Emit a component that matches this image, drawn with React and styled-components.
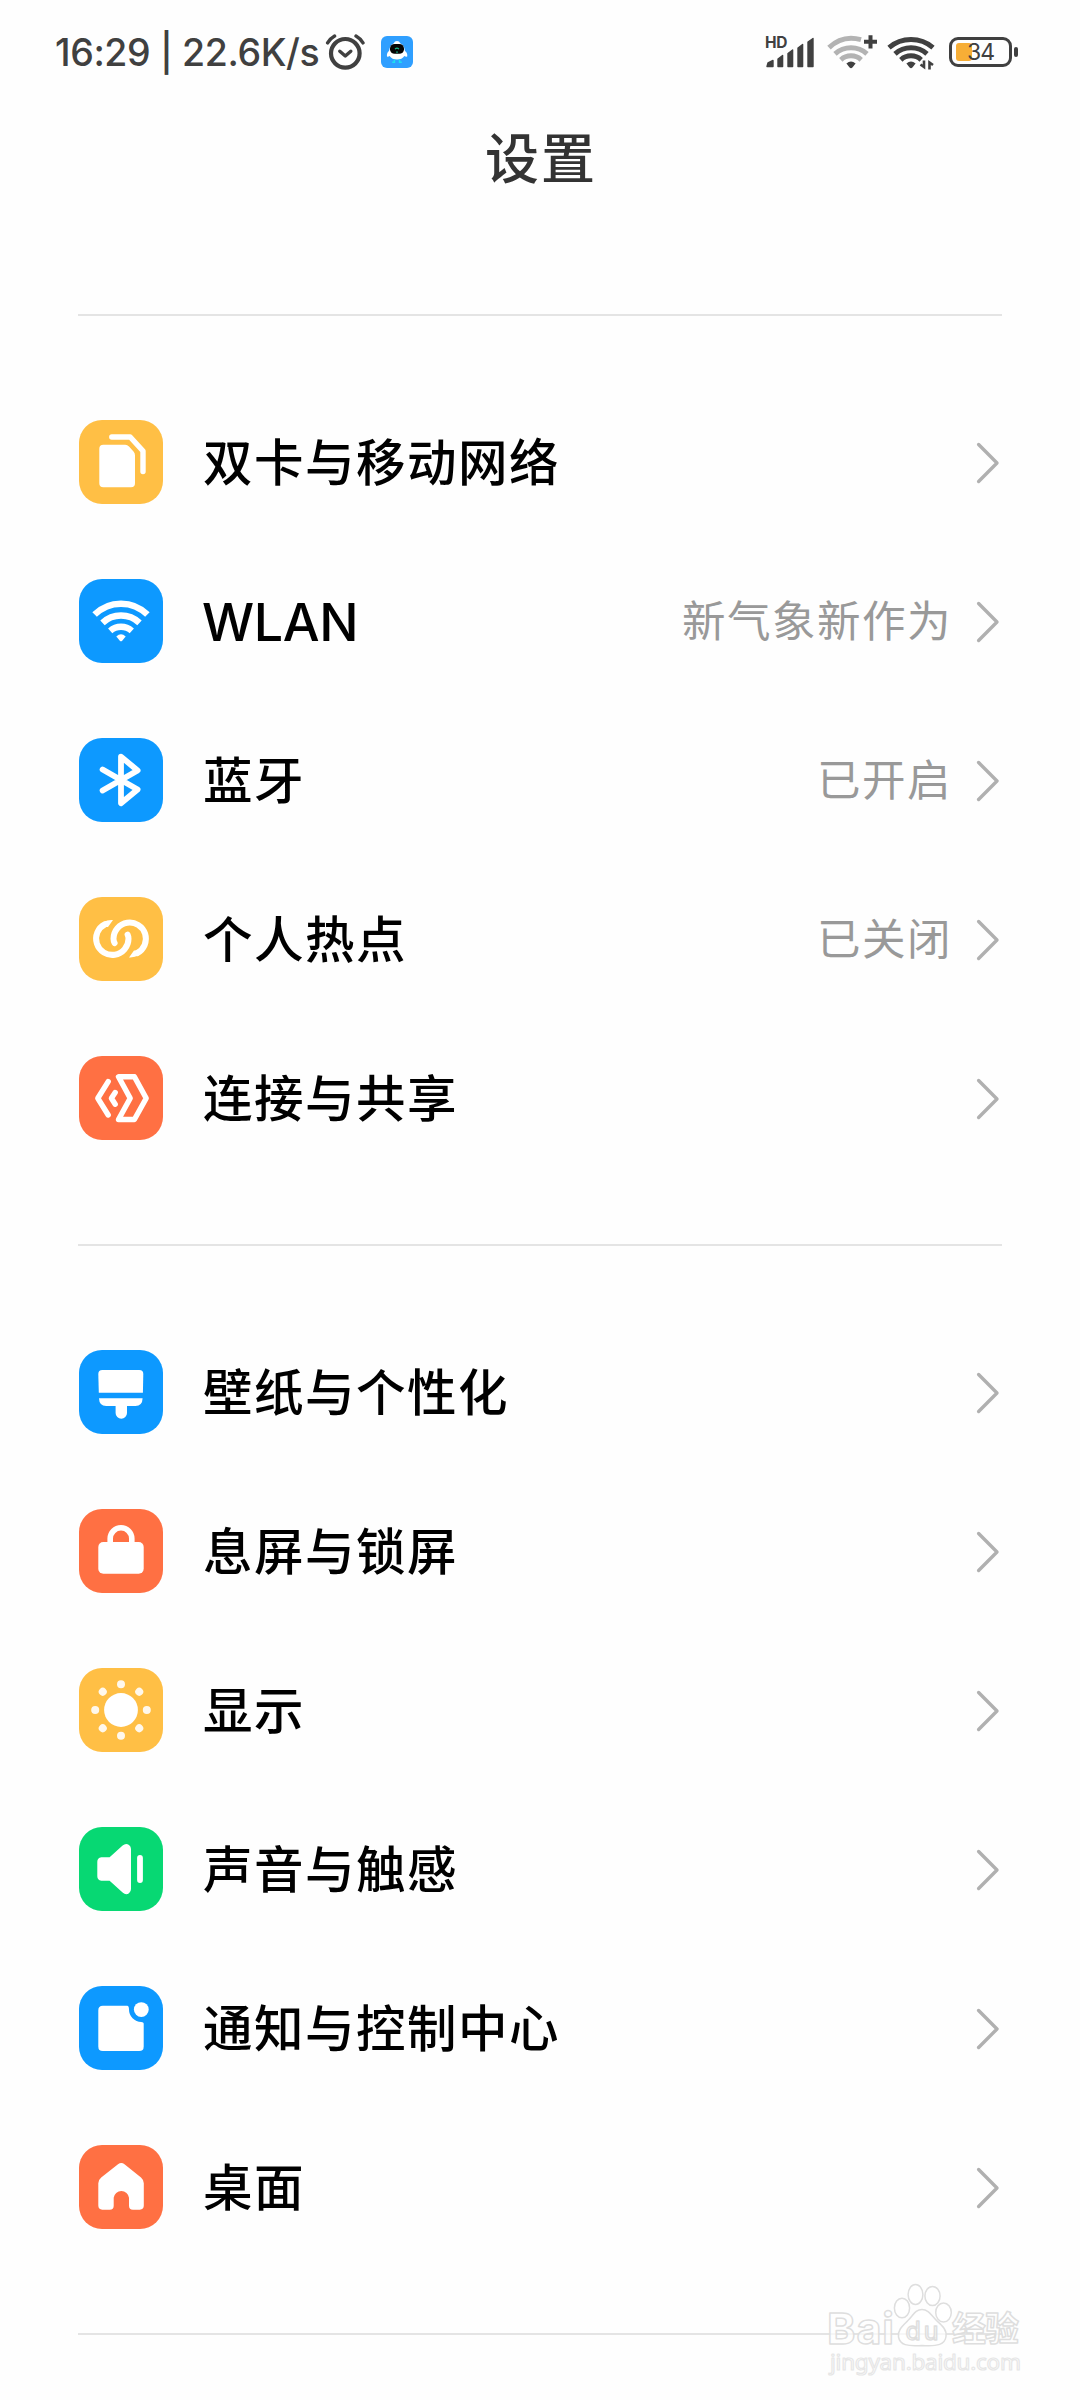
import styled, { createGlobalStyle } from "styled-components";

const YELLOW = "#ffbf45";
const BLUE = "#0d99ff";
const ORANGE = "#ff7043";
const GREEN = "#07d873";
const DARK = "#404040";

const networkItems = [
  { id: "sim", label: "双卡与移动网络", color: YELLOW },
  { id: "wlan", label: "WLAN", color: BLUE, value: "新气象新作为", latin: true },
  { id: "bluetooth", label: "蓝牙", color: BLUE, value: "已开启" },
  { id: "hotspot", label: "个人热点", color: YELLOW, value: "已关闭" },
  { id: "share", label: "连接与共享", color: ORANGE },
];

const deviceItems = [
  { id: "wallpaper", label: "壁纸与个性化", color: BLUE },
  { id: "lock", label: "息屏与锁屏", color: ORANGE },
  { id: "display", label: "显示", color: YELLOW },
  { id: "sound", label: "声音与触感", color: GREEN },
  { id: "notice", label: "通知与控制中心", color: BLUE },
  { id: "home", label: "桌面", color: ORANGE },
];

const line = {
  fill: "none",
  stroke: "#fff",
  strokeLinecap: "round",
  strokeLinejoin: "round",
};

// white glyphs, drawn on an 84 x 84 tile
const glyphs = {
  sim: (
    <>
      <path
        d="M24.3 24.8H46.2Q48.4 24.8 50 26.4L54.5 31.4Q56 33 56 35.4V63.3Q56 67.3 52 67.3H24.3Q20.3 67.3 20.3 63.3V28.8Q20.3 24.8 24.3 24.8Z"
        fill="#fff"
      />
      <path d="M32.8 17H51.2L64 31V51.5" strokeWidth="5.4" {...line} />
    </>
  ),
  wlan: (
    <>
      <g {...line} strokeLinecap="butt" strokeWidth="6.4">
        <path d="M15.6 35.6A37.4 37.4 0 0 1 68.4 35.6" />
        <path d="M23.5 43.8A27 27 0 0 1 60.5 43.8" />
        <path d="M31.2 51.8A16.3 16.3 0 0 1 52.8 51.8" />
      </g>
      <path d="M37.3 57.6Q42 52.8 46.7 57.6L43.2 61.8Q42 62.8 40.8 61.8Z" fill="#fff" />
    </>
  ),
  bluetooth: (
    <path
      d="M23.6 31.5L58.6 51.5L42 65.2V18.6L58.6 32.5L23.6 52.5"
      strokeWidth="5.8"
      {...line}
    />
  ),
  hotspot: (
    <>
      <g {...line} strokeWidth="6">
        <path d="M26 27.2A16.2 16.2 0 1 0 49.5 41.7Q49.5 39.4 48.6 37.6" />
        <path d="M58 56.2A16.2 16.2 0 1 0 34.5 41.7Q34.5 44 35.6 46" />
      </g>
      <path d="M24 25.4Q28.5 22.6 34 23L29 30L26 30Z" fill="#fff" />
      <path d="M60 58Q55.5 60.8 50 60.4L55 53.4L58 53.4Z" fill="#fff" />
    </>
  ),
  share: (
    <g {...line} strokeWidth="5.4">
      <path d="M29.2 25.6L18.8 42.3L29.2 59" />
      <path d="M36.2 36.6L32.4 42.3L36.2 48.2" />
      <path d="M39.5 20.8H55.4L67.2 42.3L55.4 63.5H39.5L51.2 42.3Z" />
    </g>
  ),
  wallpaper: (
    <g fill="#fff">
      <path d="M23.3 20H60.3Q64.3 20 64.3 24L63.9 42.8H19.8L19.3 24Q19.3 20 23.3 20Z" />
      <path d="M20 48.3H63.6Q63.4 56 56.4 56H48V63A5.7 5.7 0 0 1 36.6 63V56H27.2Q20.2 56 20 48.3Z" />
    </g>
  ),
  lock: (
    <>
      <rect x="19.3" y="33" width="45.4" height="31.7" rx="5" fill="#fff" />
      <path d="M31.2 35V29.6a10.8 10.8 0 0 1 21.6 0V35" strokeWidth="5.6" {...line} />
    </>
  ),
  display: (
    <>
      <circle cx="42" cy="42" r="16.9" fill="#fff" />
      <g fill="#fff" opacity="0.9">
        {[0, 45, 90, 135, 180, 225, 270, 315].map((deg) => (
          <circle key={deg} cx="42" cy="16.2" r="4" transform={`rotate(${deg} 42 42)`} />
        ))}
      </g>
    </>
  ),
  sound: (
    <g fill="#fff">
      <path d="M22.3 30.3H30.6L43.6 18.4Q47 15.6 50 18Q52 19.4 52 22V62Q52 64.6 50 66.2Q47 68.4 43.6 65.6L30.6 53.8H22.3Q18.3 53.2 18.3 49.3V34.8Q18.3 30.8 22.3 30.3Z" />
      <rect x="58.1" y="28" width="5.8" height="28" rx="2.9" />
    </g>
  ),
  notice: (
    <g fill="#fff">
      <path d="M23.8 19.7H48.2Q50 19.9 50 23.6A12.4 12.4 0 0 0 62.3 36Q64.7 36 64.7 37.6V60.4Q64.7 65 60.2 65H23.8Q19.3 65 19.3 60.4V24.2Q19.3 19.7 23.8 19.7Z" />
      <circle cx="62.3" cy="23.6" r="7.4" />
    </g>
  ),
  home: (
    <path
      d="M39 19.3Q42.3 16.8 45.5 19.3L62 32.4Q64.8 34.8 64.8 38.2V60.6Q64.8 64.7 60.8 64.7H54Q50 64.7 50 60.7V52.8A7.7 7.7 0 0 0 34.7 52.8V60.7Q34.7 64.7 30.7 64.7H23.3Q19.3 64.7 19.3 60.6V38.2Q19.3 34.8 22.2 32.4Z"
      fill="#fff"
    />
  ),
};

const AlarmIcon = () => (
  <svg width="40" height="38" viewBox="0 0 40 38" fill="none" stroke={DARK} strokeLinecap="round">
    <circle cx="20.3" cy="20.3" r="14.3" strokeWidth="4.2" />
    <path d="M2.6 9.9Q5.4 5.3 9.6 3M31 3Q35.2 5.3 38 9.9" strokeWidth="3.4" />
    <path d="M14.8 18.2L20.3 23L25.8 18.2" strokeWidth="3.4" strokeLinejoin="round" />
  </svg>
);

const RobotIcon = () => (
  <svg width="32" height="32" viewBox="0 0 32 32">
    <rect width="32" height="32" rx="6" fill="#2f9fff" />
    <path
      d="M16 5Q18.4 5 19.2 7.2Q23.4 9 24 15Q26.8 17 26.2 20.6Q24.4 20.8 23.4 20Q21 23.6 16 23.6Q11 23.6 8.6 20Q7.6 20.8 6 20.6Q5.4 17 8 15Q8.8 9 12.8 7.2Q13.6 5 16 5Z"
      fill="#fff"
    />
    <rect x="9" y="8" width="14" height="9.8" rx="4.6" fill="#050505" />
    <path d="M14 13.2Q16 11.2 18 13.2M15.2 16.2H16.8" stroke="#19b98c" strokeWidth="1.2" fill="none" />
    <path d="M13.4 23.4V26.2H11.2M18.6 23.4V26.2H20.8" stroke="#1de0f0" strokeWidth="1.6" fill="none" />
  </svg>
);

const SignalIcon = () => (
  <svg width="50" height="40" viewBox="0 0 50 40">
    <text x="0" y="16" fontFamily="Inter, sans-serif" fontSize="15.5" fontWeight="700" fill={DARK} textLength="22.5">
      HD
    </text>
    <g fill={DARK} stroke={DARK} strokeWidth="1.4" strokeLinejoin="round">
      <path d="M2 34.5L3 31L8 28.5V34.5Z" />
      <path d="M13 34.5V27L17.6 23.5V34.5Z" />
      <path d="M23 34.5V21.5L27.6 18V34.5Z" />
      <path d="M33 34.5V16L37.6 12.5V34.5Z" />
      <path d="M43 34.5V10L48 6.5V34.5Z" />
    </g>
  </svg>
);

const StatusWifi = ({ color, children }) => (
  <svg width="52" height="38" viewBox="0 0 52 38">
    <g fill="none" stroke={color} strokeWidth="5">
      {color === DARK ? (
        <path d="M2 14.6A34 34 0 0 1 46 14.6" />
      ) : (
        <path d="M2 14.6Q15.5 1.5 34 6.6" />
      )}
      <path d="M8 20.8A24 24 0 0 1 40 20.8" />
      <path d="M13.8 26.8A15.2 15.2 0 0 1 34.2 26.8" />
    </g>
    <path d="M19.4 30.6Q24 26.4 28.6 30.6L25.4 34.6Q24 35.8 22.6 34.6Z" fill={DARK} />
    {children}
  </svg>
);

const Chevron = () => (
  <svg width="24" height="42" viewBox="0 0 24 42" fill="none">
    <path d="M2.6 2.5L21 21L2.6 39.5" stroke="#b0b0b0" strokeWidth="3.4" strokeLinecap="round" strokeLinejoin="round" />
  </svg>
);

const Watermark = () => (
  <WatermarkBox>
    <svg width="216" height="110" viewBox="0 0 216 110">
      <g fill="#fff" fillOpacity="0.7" stroke="#dedede" strokeWidth="1.5" strokeLinejoin="round">
        <ellipse cx="86" cy="33" rx="7.6" ry="9.8" />
        <ellipse cx="99.5" cy="19.5" rx="7.4" ry="10" />
        <ellipse cx="116.5" cy="21" rx="7.6" ry="9.6" />
        <ellipse cx="127.5" cy="37.5" rx="7.8" ry="9.6" />
        <path d="M106 34.5C113 34.5 115.5 41 121 46C126.5 51 131 55 130 61.5C129 69.5 122 71.5 106 70.5C91 71.5 84 70 82.5 62C81.5 55 86.5 51 91.5 46C97 41 99 34.5 106 34.5Z" />
        <text x="11" y="68.5" fontFamily="Inter, sans-serif" fontSize="43" fontWeight="700" textLength="67">
          Bai
        </text>
        <text x="89.5" y="64.5" fontFamily="Inter, sans-serif" fontSize="25" textLength="33">
          du
        </text>
        <text x="136" y="66" fontFamily="'Noto Sans CJK SC', sans-serif" fontSize="34" fontWeight="700" textLength="67">
          经验
        </text>
        <text x="14" y="94.5" fontFamily="'Noto Sans', sans-serif" fontSize="22.5" fontWeight="400" stroke="#e6e6e6" strokeWidth="1.2" textLength="191">
          jingyan.baidu.com
        </text>
      </g>
    </svg>
  </WatermarkBox>
);

const SettingList = ({ items }) => (
  <Section>
    {items.map((item) => (
      <Row key={item.id}>
        <Tile $color={item.color}>
          <svg width="84" height="84" viewBox="0 0 84 84">
            {glyphs[item.id]}
          </svg>
        </Tile>
        <Label $latin={item.latin}>{item.label}</Label>
        {item.value && <Value>{item.value}</Value>}
        <Chevron />
      </Row>
    ))}
  </Section>
);

const App = () => {
  return (
    <Page>
      <GlobalStyle />
      <StatusBar>
        <Clock>16:29 | 22.6K/s</Clock>
        <StatusLeftIcons>
          <AlarmIcon />
          <RobotIcon />
        </StatusLeftIcons>
        <StatusRightIcons>
          <SignalIcon />
          <WifiGroup>
            <StatusWifi color="#b3b3b3">
              <path d="M43.5 2.2V15.4M37 8.8H50" stroke={DARK} strokeWidth="4" />
            </StatusWifi>
            <StatusWifi color={DARK}>
              <path d="M33.5 31.5L37 34V27.5M42.5 36.5V29.5L46 32" stroke={DARK} strokeWidth="2.6" fill="none" />
            </StatusWifi>
          </WifiGroup>
          <Battery>
            <BatteryBody>
              <BatteryFill />
              <BatteryText>34</BatteryText>
            </BatteryBody>
            <BatteryCap />
          </Battery>
        </StatusRightIcons>
      </StatusBar>
      <Title>设置</Title>
      <Divider />
      <SettingList items={networkItems} />
      <Divider />
      <SettingList items={deviceItems} />
      <Divider />
      <Watermark />
    </Page>
  );
};

const GlobalStyle = createGlobalStyle`
  body {
    margin: 0;
    background: #fefefe;
  }
  svg {
    display: block;
    flex-shrink: 0;
  }
`;

const Page = styled.div`
  position: relative;
  box-sizing: border-box;
  width: 1080px;
  height: 2400px;
  overflow: hidden;
  background: #fefefe;
  font-family: Inter, "Noto Sans CJK SC", sans-serif;
`;

const StatusBar = styled.header`
  display: flex;
  align-items: center;
  height: 104px;
  padding: 0 62px 0 55px;
`;
const Clock = styled.span`
  width: 270px;
  padding-top: 1px;
  color: ${DARK};
  font-size: 37.5px;
  font-weight: 450;
  line-height: 44px;
  letter-spacing: -0.4px;
  white-space: nowrap;
`;
const StatusLeftIcons = styled.div`
  display: flex;
  align-items: center;
  gap: 16px;
`;
const StatusRightIcons = styled.div`
  display: flex;
  align-items: center;
  margin-left: auto;
`;
const WifiGroup = styled.div`
  display: flex;
  gap: 8px;
  margin: 0 10px 0 12px;
`;

const Battery = styled.div`
  display: flex;
  align-items: center;
  gap: 2px;
`;
const BatteryBody = styled.div`
  position: relative;
  box-sizing: border-box;
  width: 63px;
  height: 30px;
  padding: 3px 4px;
  border: 3px solid ${DARK};
  border-radius: 9px;
`;
const BatteryFill = styled.div`
  width: 16px;
  height: 18px;
  border-radius: 3px;
  background: #f7ae36;
`;
const BatteryText = styled.span`
  position: absolute;
  inset: 0;
  color: ${DARK};
  font-size: 23px;
  font-weight: 400;
  line-height: 25px;
  letter-spacing: -1px;
  text-align: center;
`;
const BatteryCap = styled.div`
  width: 4px;
  height: 10px;
  border-radius: 2px;
  background: ${DARK};
`;

const Title = styled.h1`
  height: 210px;
  margin: 0;
  padding: 16px 0 0 2px;
  box-sizing: border-box;
  color: #333;
  font-size: 54px;
  font-weight: 500;
  line-height: 80px;
  letter-spacing: 2px;
  text-align: center;
`;

const Divider = styled.hr`
  height: 2px;
  margin: 0 78px;
  border: 0;
  background: #e4e4e4;
`;

const Section = styled.section`
  padding: 66.5px 80px 66.5px 79px;
`;
const Row = styled.div`
  display: flex;
  align-items: center;
  height: 159px;

  > svg {
    margin-top: 2px;
  }
`;
const Tile = styled.div`
  width: 84px;
  height: 84px;
  margin-right: 40px;
  border-radius: 23px;
  background: ${({ $color }) => $color};
`;
const Label = styled.span`
  flex: 1;
  padding-top: ${({ $latin }) => ($latin ? 4 : 1)}px;
  margin-left: ${({ $latin }) => ($latin ? -1 : 0)}px;
  color: #000;
  font-size: ${({ $latin }) => ($latin ? 52 : 49.5)}px;
  font-weight: 500;
  line-height: 72px;
  letter-spacing: ${({ $latin }) => ($latin ? -0.4 : 1.5)}px;
  white-space: nowrap;
`;
const Value = styled.span`
  margin-right: 24px;
  color: #999;
  font-size: 43.5px;
  line-height: 64px;
  letter-spacing: 1.5px;
  white-space: nowrap;
`;

const WatermarkBox = styled.div`
  position: absolute;
  left: 816px;
  top: 2275px;
`;

export default App;
